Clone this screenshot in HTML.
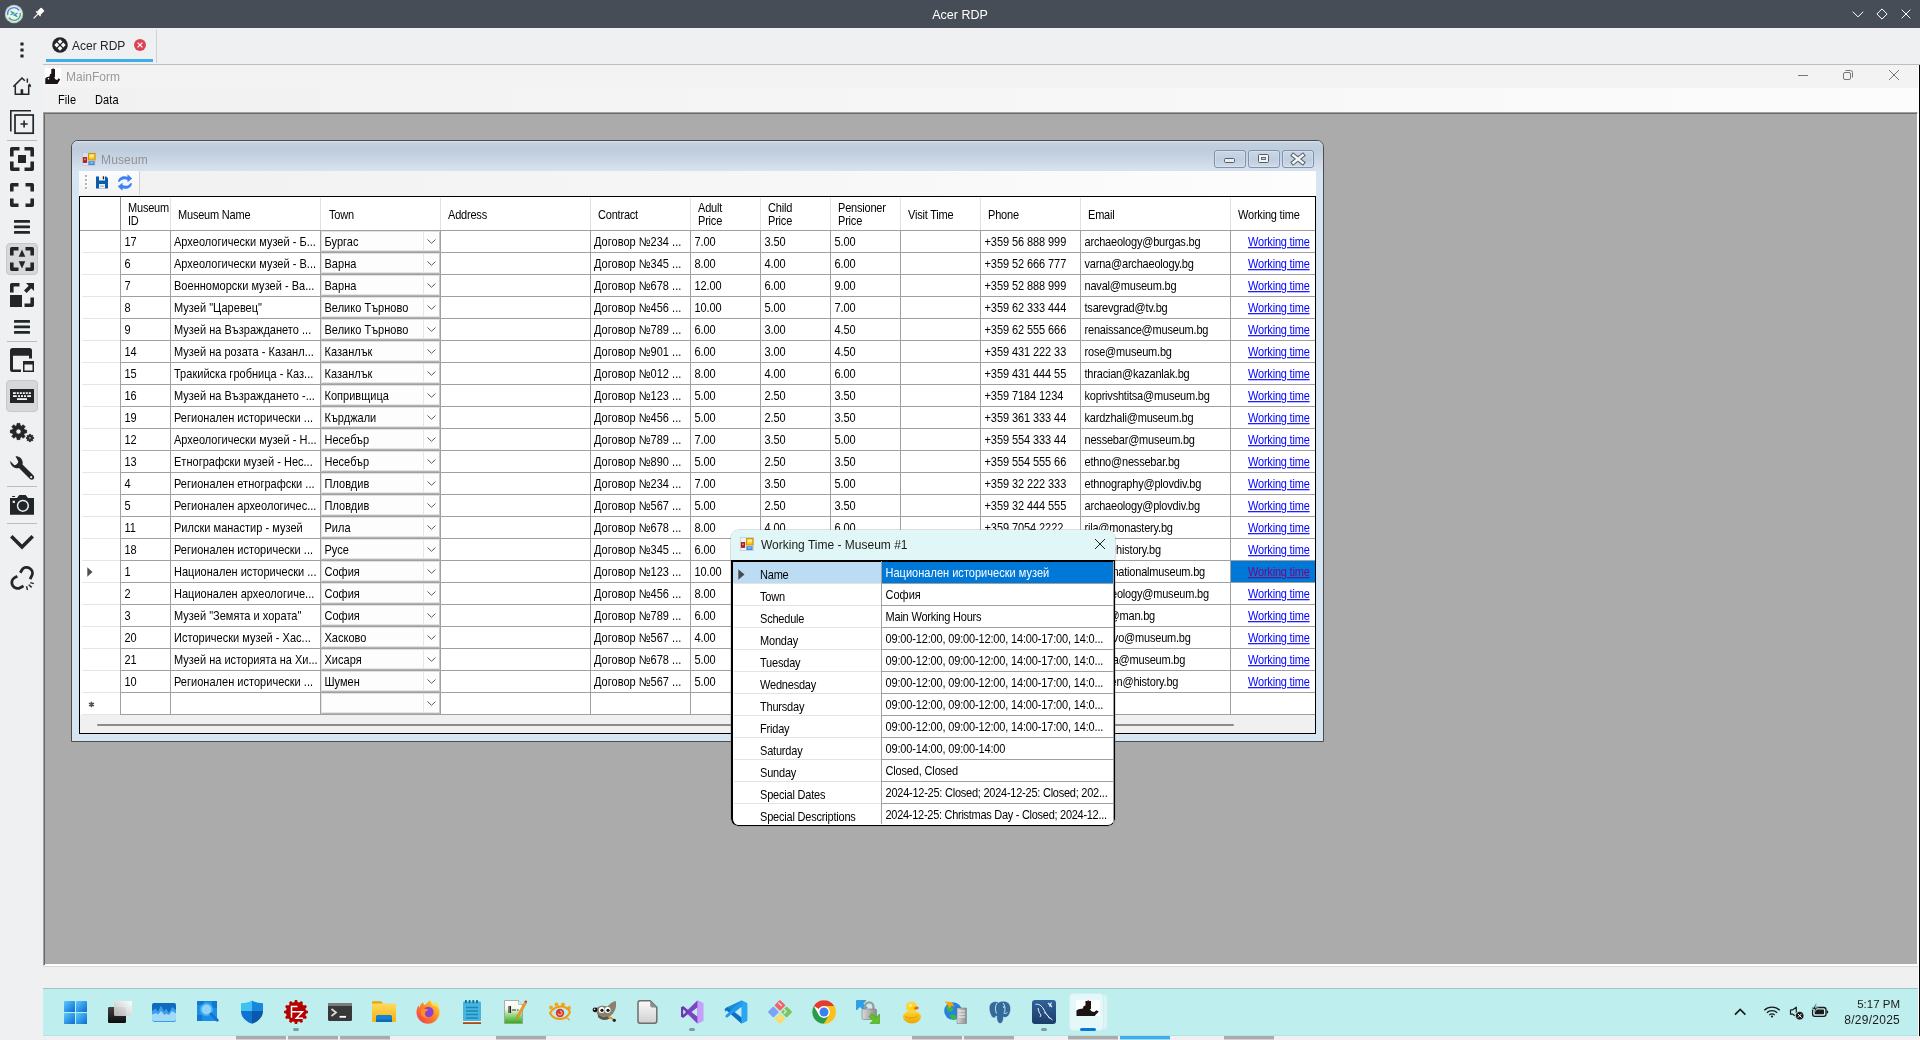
<!DOCTYPE html>
<html lang="en"><head><meta charset="utf-8"><title>Acer RDP</title>
<style>
*{box-sizing:border-box;margin:0;padding:0}
html,body{width:1920px;height:1040px;overflow:hidden}
body{position:relative;will-change:transform;background:#eff0f2;font-family:"Liberation Sans",sans-serif;font-size:11px;color:#000}
.a{position:absolute}
.a svg{display:block}
#top{left:0;top:0;width:1920px;height:28px;background:#474d57}
#top .t{left:0;width:1920px;top:1px;height:28px;line-height:28px;text-align:center;color:#fff;font-size:12.5px}
#side{left:0;top:28px;width:43px;height:1008px;background:#eff0f2}
.sep{left:7px;width:30px;height:1px;background:#bcbdbf}
.act{left:6px;width:32px;height:32px;border:1px solid #c6c7c9;border-radius:4px;background:#d7d8da}
#tabs{left:43px;top:28px;width:1877px;height:36px;background:#eff0f2}
#rdp{left:43px;top:64px;width:1877px;height:972px;background:#f0f0f0;overflow:hidden}
#mdi{left:0;top:48px;width:1875px;height:854px;background:#ababab;border:1px solid #fff;border-left-color:#a0a0a0;border-top-color:#a0a0a0;box-shadow:inset 1px 1px 0 #696969,inset 0 -1px 0 #fafafa}
.g{font-size:11px;letter-spacing:-.2px;white-space:nowrap;line-height:22px;height:22px;transform:scaleY(1.13);transform-origin:0 15px}
.h{font-size:11px;letter-spacing:-.2px;white-space:nowrap;line-height:11.5px;transform:scaleY(1.13);transform-origin:0 0}
.vl{top:0;width:1px;background:#a0a0a0}
.hl{left:0;height:1px;background:#a0a0a0}
.cb{height:21px;background:#fdfdfd;border:1px solid #e2e2e2;border-bottom:1px solid #b4b4b4;border-right-color:#c9c9c9;box-shadow:inset 0 -1px 0 #e4e4e4}
.cb i{position:absolute;right:15px;top:0;width:1px;height:19px;background:#e6e6e6}
.cb svg{position:absolute;right:3px;top:7px}
.lk{color:#0000ff;text-decoration:underline}
#tb{left:0;top:924px;width:1877px;height:48px;background:#bfeeee;border-top:1px solid #a9c8c9}
.c{letter-spacing:.02px}
.n{letter-spacing:-.08px}

</style></head>
<body>
<div id="top" class="a"><div class="a t">Acer RDP</div><svg class="a" style="left:4px;top:4px" width="20" height="20" viewBox="0 0 20 20"><circle cx="10" cy="10" r="9.200" fill="#c4c9ce"/><circle cx="10" cy="10" r="7.900" fill="#f3f1ec"/><path d="M3.800 11.200A6.300 6.300 0 0 1 15.200 6.500" fill="none" stroke="#3b8ee0" stroke-width="1.400"/><path d="M16.200 8.800A6.300 6.300 0 0 1 4.800 13.500" fill="none" stroke="#2fb871" stroke-width="1.400"/><path d="M6.600 7.300l3.200 1.800-3.200 1.800" fill="none" stroke="#2fb871" stroke-width="1.400"/><path d="M13.400 9.100l-3.200 1.800 3.200 1.800" fill="none" stroke="#3b8ee0" stroke-width="1.400"/></svg><svg class="a" style="left:32px;top:7px" width="13" height="13" viewBox="0 0 13 13"><g transform="rotate(45 7.500 5.500)" fill="#fff"><rect x="5.100" y="0.800" width="4.800" height="6" rx="0.900"/><rect x="4.300" y="6.500" width="6.400" height="1.300"/><rect x="6.900" y="7.500" width="1.200" height="6.300"/></g></svg><svg class="a" style="left:1848px;top:6px" width="68" height="16" viewBox="0 0 68 16"><g fill="none" stroke="#fff" stroke-width="1"><path d="M4.800 5.700L10 10.900 15.200 5.700"/><path d="M34 2.900L39.100 8 34 13.100 28.900 8z"/><path d="M53.700 3.700l8.600 8.600M62.300 3.700l-8.600 8.600"/></g></svg></div><div id="side" class="a"><div class="a sep" style="top:112px"></div><div class="a sep" style="top:313px"></div><div class="a sep" style="top:458px"></div><div class="a sep" style="top:495px"></div><div class="a act" style="top:215px"></div><div class="a act" style="top:352px"></div><svg class="a" style="left:0;top:0" width="43" height="580" viewBox="0 28 43 580"><g fill="#232629"><rect x="20.400" y="42.4" width="3.200" height="3.200" rx="0.500"/><rect x="20.400" y="48.4" width="3.200" height="3.200" rx="0.500"/><rect x="20.400" y="54.4" width="3.200" height="3.200" rx="0.500"/><path d="M13.4 86.6L22 78l2.800 2.800M28.800 84.800l1.800 1.800" fill="none" stroke="#232629" stroke-width="1.5"/><path d="M15.3 85.5v8.700h13.4v-8.700" fill="none" stroke="#232629" stroke-width="1.5"/><rect x="20.6" y="89.2" width="2.6" height="5"/><rect x="26.6" y="78.500" width="1.500" height="4.200"/><path d="M27.600 85.500l2.200-2.200 1.600 3.300z"/><path d="M10.800 131.500V110.800H31" fill="none" stroke="#232629" stroke-width="1.6"/><rect x="15" y="115" width="18.200" height="18.200" fill="none" stroke="#232629" stroke-width="1.700"/><path d="M20.500 124h7.200M24.100 120.400v7.200" fill="none" stroke="#232629" stroke-width="1.600"/><path d="M11.80 156.50V148.80H19.50M24.50 148.80H32.20V156.50M32.20 161.50V169.20H24.50M19.50 169.20H11.80V161.50" fill="none" stroke="#232629" stroke-width="3.6" stroke-linejoin="round"/><rect x="18" y="155" width="8" height="8"/><path d="M11.80 191.50V184.80H18.50M25.50 184.80H32.20V191.50M32.20 198.50V205.20H25.50M18.50 205.20H11.80V198.50" fill="none" stroke="#232629" stroke-width="3.6" stroke-linejoin="round"/><rect x="14" y="220.0" width="16" height="2.8" rx="0.4"/><rect x="14" y="225.5" width="16" height="2.8" rx="0.4"/><rect x="14" y="231.0" width="16" height="2.8" rx="0.4"/><rect x="14" y="320.0" width="16" height="2.8" rx="0.4"/><rect x="14" y="325.5" width="16" height="2.8" rx="0.4"/><rect x="14" y="331.0" width="16" height="2.8" rx="0.4"/><path d="M11.80 255.50V248.80H18.50M25.50 248.80H32.20V255.50M32.20 262.50V269.20H25.50M18.50 269.20H11.80V262.50" fill="none" stroke="#232629" stroke-width="3.6" stroke-linejoin="round"/><path d="M22 249.500l3.300 7.300h-6.600zM22 268.500l3.300-7.300h-6.600z"/><path d="M11.80 292.50V284.80H19.50M32.20 297.50V305.20H24.50" fill="none" stroke="#232629" stroke-width="3.6" stroke-linejoin="round"/><rect x="10" y="295" width="12" height="12"/><path d="M26 283h8v8l-2.700-2.700-4.700 4.700-2.600-2.600 4.700-4.700z"/><path d="M12.500 348h17q2.500 0 2.500 2.500v8h-3v-2.700h-16v13.700h8v2.500h-8.500q-2.500 0-2.500-2.500v-19q0-2.500 2.500-2.500z"/><path d="M23 361h11v11h-11zM24.500 364.500v6h8v-6z" fill-rule="evenodd"/><rect x="10" y="389" width="24" height="14"/><rect x="13.0" y="392.200" width="2.8" height="1.8" fill="#f4f4f5"/><rect x="16.8" y="392.200" width="2.0" height="1.8" fill="#f4f4f5"/><rect x="19.8" y="392.200" width="2.0" height="1.8" fill="#f4f4f5"/><rect x="22.8" y="392.200" width="2.0" height="1.8" fill="#f4f4f5"/><rect x="25.8" y="392.200" width="2.0" height="1.8" fill="#f4f4f5"/><rect x="28.8" y="392.200" width="2.0" height="1.8" fill="#f4f4f5"/><rect x="13.0" y="395.200" width="3.8" height="1.8" fill="#f4f4f5"/><rect x="18.0" y="395.200" width="2.0" height="1.8" fill="#f4f4f5"/><rect x="21.0" y="395.200" width="2.0" height="1.8" fill="#f4f4f5"/><rect x="24.0" y="395.200" width="2.0" height="1.8" fill="#f4f4f5"/><rect x="27.2" y="395.200" width="3.8" height="1.8" fill="#f4f4f5"/><rect x="17" y="398.200" width="10" height="1.8" fill="#f4f4f5"/><path d="M17.06 423.43L19.94 423.43L20.07 425.50L21.64 426.15L23.19 424.77L25.23 426.81L23.85 428.36L24.50 429.93L26.57 430.06L26.57 432.94L24.50 433.07L23.85 434.64L25.23 436.19L23.19 438.23L21.64 436.85L20.07 437.50L19.94 439.57L17.06 439.57L16.93 437.50L15.36 436.85L13.81 438.23L11.77 436.19L13.15 434.64L12.50 433.07L10.43 432.94L10.43 430.06L12.50 429.93L13.15 428.36L11.77 426.81L13.81 424.77L15.36 426.15L16.93 425.50zM15.90 431.50a2.60 2.60 0 1 0 5.20 0a2.60 2.60 0 1 0 -5.20 0z" fill-rule="evenodd" stroke="#232629" stroke-width="0.8" stroke-linejoin="round"/><path d="M29.35 434.36L30.65 434.36L30.71 435.29L31.42 435.58L32.12 434.96L33.04 435.88L32.42 436.58L32.71 437.29L33.64 437.35L33.64 438.65L32.71 438.71L32.42 439.42L33.04 440.12L32.12 441.04L31.42 440.42L30.71 440.71L30.65 441.64L29.35 441.64L29.29 440.71L28.58 440.42L27.88 441.04L26.96 440.12L27.58 439.42L27.29 438.71L26.36 438.65L26.36 437.35L27.29 437.29L27.58 436.58L26.96 435.88L27.88 434.96L28.58 435.58L29.29 435.29zM28.80 438.00a1.20 1.20 0 1 0 2.40 0a1.20 1.20 0 1 0 -2.40 0z" fill-rule="evenodd" stroke="#232629" stroke-width="0.8" stroke-linejoin="round"/><path d="M15.500 456.300c3.500-0.300 6.800 2 7.200 6 0.100 0.800 0 1.500-0.200 2.200l10.800 10.700c1.200 1.200 1.200 2.800 0.200 3.800s-2.700 0.900-3.800-0.200l-10.700-10.800c-0.700 0.200-1.500 0.300-2.300 0.200-3.800-0.400-6.500-3.500-6.500-7.200l4.200 4.200c1.500 0.300 3.600-1.300 3.900-3.600z"/><circle cx="31.200" cy="477.200" r="1.1" fill="#eff0f2"/><path d="M10 498h7l2.300-3h6.400l2.300 3h6v16.700h-24zM22.900 499.700a6.100 6.100 0 1 0 0.010 0zM22.900 501.200a4.600 4.600 0 1 1-0.010 0zM12.700 500.800v2.200h2.200v-2.200z" fill-rule="evenodd"/><circle cx="22.900" cy="505.800" r="3.600" fill="none" stroke="#232629" stroke-width="0.900"/><rect x="12" y="496" width="3.200" height="1" rx="0.500"/><path d="M11.300 536.300L22 547l10.700-10.700" fill="none" stroke="#232629" stroke-width="3.500"/><g fill="none" stroke="#232629" stroke-width="2.800"><path d="M20.300 572.800l1.700-3c1.700-2.700 5.200-3.200 7.800-1.500 2.500 1.700 3.400 4.800 2 7.400l-1.700 3.400"/><path d="M17.300 576.200l-3 1.700c-2.700 1.700-3.200 5.200-1.500 7.800 1.700 2.500 4.800 3.400 7.400 2l3.300-1.700"/></g><g fill="none" stroke="#232629" stroke-width="1.400"><path d="M30.300 582.600l3.500 1M28.700 584.800l3 2.600M26.500 586.300l1 3.700"/></g></g></svg></div><div id="tabs" class="a"><svg class="a" style="left:9px;top:9px" width="16" height="16" viewBox="0 0 16 16"><circle cx="8" cy="8" r="7.800" fill="#232629"/><path d="M8 2.300L10.400 4.700 8 7.100 5.600 4.700zM8 8.900L10.400 11.300 8 13.700 5.600 11.300zM4.700 5.600L7.100 8 4.700 10.400 2.300 8zM11.300 5.600L13.700 8 11.300 10.400 8.900 8z" fill="#fcfcfc"/></svg><div class="a" style="left:29px;top:9px;font-size:12px;line-height:18px;color:#232629;white-space:nowrap">Acer RDP</div><svg class="a" style="left:91px;top:11px" width="12" height="12" viewBox="0 0 12 12"><circle cx="6" cy="6" r="6" fill="#da4453"/><path d="M3.600 3.600l4.800 4.800M8.400 3.600l-4.800 4.800" stroke="#fff" stroke-width="1.200" fill="none"/></svg><div class="a" style="left:3px;top:31px;width:107px;height:3px;background:#3daee9"></div><div class="a" style="left:113px;top:2px;width:1px;height:33px;background:#d0d1d3"></div></div><div id="rdp" class="a"><div class="a" style="left:0;top:0;width:1877px;height:1px;background:#bdbebf"></div><div class="a" style="left:0;top:1px;width:1875px;height:23px;background:#f3f3f3"></div><div class="a" style="left:0;top:24px;width:1875px;height:24px;background:linear-gradient(90deg,#f1f1f1,#f4f4f4 30%,#fcfcfc)"></div><div class="a" style="left:1875px;top:1px;width:1px;height:971px;background:#fff"></div><div class="a" style="left:1876px;top:1px;width:1px;height:971px;background:#000"></div><svg class="a" style="left:2px;top:4px" width="16" height="16" viewBox="0 0 16 16"><rect width="16" height="16" fill="#fff"/><path d="M6.300 1H10V8.800L9.200 9.600 10.600 11.600 12.200 12 13.600 10.200 15.200 11.600 12.400 15.900H0.300V10.400L1.600 9.300 4.600 8.600 5 6.200 6.300 5.600z" fill="#1a1414"/><rect x="2.800" y="10" width="1.400" height="1.400" fill="#fff"/><rect x="7.600" y="0.200" width="1.200" height="1.200" fill="#e01010"/></svg><div class="a" style="left:23px;top:4px;font-size:12px;line-height:18px;color:#999;white-space:nowrap;letter-spacing:0">MainForm</div><div class="a" style="left:15px;top:27px;font-size:11px;line-height:18px;white-space:nowrap;letter-spacing:.1px;transform:scaleY(1.13);transform-origin:0 13px">File</div><div class="a" style="left:52px;top:27px;font-size:11px;line-height:18px;white-space:nowrap;letter-spacing:.1px;transform:scaleY(1.13);transform-origin:0 13px">Data</div><svg class="a" style="left:1750px;top:4px" width="112" height="16" viewBox="0 0 112 16"><g fill="none" stroke="#777" stroke-width="1"><path d="M5 7.500h10"/><rect x="50.500" y="4.500" width="7" height="7" rx="1.500"/><path d="M52.500 2.500h5q2 0 2 2v5"/><path d="M96 2l10 10M106 2l-10 10"/></g></svg><div id="mdi" class="a"></div><div class="a" style="left:0;top:902px;width:1875px;height:22px;background:#f0f0f0;border-top:1px solid #d9d9d9"></div></div><div class="a" style="left:0;top:1036px;width:1920px;height:4px;background:#eff0f1"></div><div class="a" style="left:236px;top:1036px;width:50px;height:4px;background:#ababab;border-bottom:1px solid #d0d0d0"></div><div class="a" style="left:288px;top:1036px;width:50px;height:4px;background:#ababab;border-bottom:1px solid #d0d0d0"></div><div class="a" style="left:340px;top:1036px;width:50px;height:4px;background:#ababab;border-bottom:1px solid #d0d0d0"></div><div class="a" style="left:496px;top:1036px;width:50px;height:4px;background:#ababab;border-bottom:1px solid #d0d0d0"></div><div class="a" style="left:912px;top:1036px;width:50px;height:4px;background:#ababab;border-bottom:1px solid #d0d0d0"></div><div class="a" style="left:964px;top:1036px;width:50px;height:4px;background:#ababab;border-bottom:1px solid #d0d0d0"></div><div class="a" style="left:1068px;top:1036px;width:50px;height:4px;background:#ababab;border-bottom:1px solid #d0d0d0"></div><div class="a" style="left:1120px;top:1036px;width:50px;height:4px;background:#3daee9;border-bottom:1px solid #a5d8f3"></div><div class="a" style="left:1224px;top:1036px;width:50px;height:4px;background:#ababab;border-bottom:1px solid #d0d0d0"></div><div class="a" style="left:71px;top:140px;width:1253px;height:602px;border:1px solid #4d4d4d;border-radius:7px 7px 0 0;background:#d7e4f2;overflow:hidden"><div class="a" style="left:0;top:0;width:1251px;height:30px;background:linear-gradient(#dbe4ee 0,#c3d0df 2px,#bdccdc 8px,#c6d3e2 16px,#d7e2ef 29px)"></div><svg class="a" style="left:10px;top:11px" width="14" height="14" viewBox="0 0 14 14"><rect x="0.500" y="0.500" width="13" height="13" fill="#d9e6f5" stroke="#c9b8b0" stroke-width="0.600" opacity="0.700"/><rect x="6.500" y="1.500" width="6.500" height="6.500" fill="#f7c51c" stroke="#c98f06" stroke-width="0.900"/><rect x="7.600" y="2.400" width="4.300" height="3" fill="#ffe680"/><rect x="1.200" y="5.500" width="3.600" height="5" fill="#c0110b" stroke="#8e0c08" stroke-width="0.600"/><rect x="2.300" y="6.500" width="1.300" height="1.800" fill="#ffb0a0"/><rect x="6.800" y="9.600" width="5.400" height="3.200" fill="#3f8df0" stroke="#2a6fd0" stroke-width="0.500"/><rect x="7.800" y="10.300" width="3.400" height="1.200" fill="#9cc6ff"/></svg><div class="a" style="left:29px;top:10px;font-size:12px;line-height:18px;color:#939393;white-space:nowrap;letter-spacing:.15px">Museum</div><div class="a" style="left:1142px;top:9px;width:32px;height:18px;border:1px solid #8292ae;border-radius:3px;background:linear-gradient(#c9d6e5,#bfcedf 55%,#cedae8);box-shadow:inset 0 0 0 1px rgba(255,255,255,.25)"></div><div class="a" style="left:1176px;top:9px;width:32px;height:18px;border:1px solid #8292ae;border-radius:3px;background:linear-gradient(#c9d6e5,#bfcedf 55%,#cedae8);box-shadow:inset 0 0 0 1px rgba(255,255,255,.25)"></div><div class="a" style="left:1210px;top:9px;width:32px;height:18px;border:1px solid #8292ae;border-radius:3px;background:linear-gradient(#c9d6e5,#bfcedf 55%,#cedae8);box-shadow:inset 0 0 0 1px rgba(255,255,255,.25)"></div><svg class="a" style="left:1142px;top:9px" width="100" height="18" viewBox="0 0 100 18"><rect x="10.500" y="8.500" width="10" height="4" rx="1" fill="#ececec" stroke="#535c6b"/><rect x="44.500" y="4.500" width="10" height="8" rx="1" fill="#f4f4f4" stroke="#535c6b"/><rect x="47.500" y="7.500" width="4" height="2" fill="#c4d2e2" stroke="#535c6b" stroke-width="0.900"/><path d="M79.300 5.300l9.400 7.400M88.700 5.300l-9.400 7.400" stroke="#535c6b" stroke-width="4.400" fill="none" stroke-linecap="square"/><path d="M79.300 5.300l9.400 7.400M88.700 5.300l-9.400 7.400" stroke="#f4f4f4" stroke-width="2.400" fill="none" stroke-linecap="square"/></svg><div class="a" style="left:7px;top:30px;width:1237px;height:563px;background:#f0f0f0"></div><div class="a" style="left:7px;top:30px;width:1237px;height:25px;background:linear-gradient(90deg,#f1f1f1,#f5f5f5 45%,#fdfdfd)"></div><div class="a" style="left:7px;top:30px;width:61px;height:24px;background:linear-gradient(#fcfcfc,#f3f3f3);border-right:1px solid #cfcfcf;border-radius:0 2px 2px 0"></div><svg class="a" style="left:13px;top:34px" width="3" height="16" viewBox="0 0 3 16"><rect x="1" y="1" width="2" height="2" fill="#fff"/><rect x="0" y="0" width="2" height="2" fill="#b4b4b4"/><rect x="1" y="5" width="2" height="2" fill="#fff"/><rect x="0" y="4" width="2" height="2" fill="#b4b4b4"/><rect x="1" y="9" width="2" height="2" fill="#fff"/><rect x="0" y="8" width="2" height="2" fill="#b4b4b4"/><rect x="1" y="13" width="2" height="2" fill="#fff"/><rect x="0" y="12" width="2" height="2" fill="#b4b4b4"/></svg><svg class="a" style="left:24px;top:35px" width="12" height="13" viewBox="0 0 12 13"><path d="M0 0.500h10.300L12 2.200V12.500H0z" fill="#0b5cab"/><rect x="3" y="0" width="6" height="4.500" fill="#f2f4f6"/><rect x="6.800" y="0.300" width="1.300" height="3" fill="#222"/><rect x="3" y="8" width="6" height="4.500" fill="#eceff2"/><rect x="4" y="9.500" width="4" height="1.500" fill="#b9bec4"/></svg><svg class="a" style="left:45px;top:33px" width="16" height="17" viewBox="0 0 16 17"><g fill="#3b82f6"><path d="M1 7.800C1.300 4.200 4.300 2.200 7.600 2.200c1 0 2 0.200 2.900 0.600V0.200l4.700 4.400-4.700 3.700V5.900c-0.900-0.500-1.900-0.700-2.900-0.700-2.300 0-4.200 1-4.800 2.600z"/><path d="M15 9.200c-0.300 3.600-3.300 5.600-6.600 5.600-1 0-2-0.200-2.900-0.600v2.600L0.800 12.400l4.700-3.700v2.400c0.900 0.500 1.900 0.700 2.900 0.700 2.300 0 4.200-1 4.800-2.600z"/></g></svg><div class="a" style="left:7px;top:55px;width:1237px;height:538px;border:1px solid #000;background:#fff;overflow:hidden"><div class="a vl" style="left:40px;height:33px;background:#8d8d8d"></div><div class="a vl" style="left:90px;top:1px;height:32px;background:#e1e1e1"></div><div class="a vl" style="left:240px;top:1px;height:32px;background:#e1e1e1"></div><div class="a vl" style="left:360px;top:1px;height:32px;background:#e1e1e1"></div><div class="a vl" style="left:510px;top:1px;height:32px;background:#e1e1e1"></div><div class="a vl" style="left:610px;top:1px;height:32px;background:#e1e1e1"></div><div class="a vl" style="left:680px;top:1px;height:32px;background:#e1e1e1"></div><div class="a vl" style="left:750px;top:1px;height:32px;background:#e1e1e1"></div><div class="a vl" style="left:820px;top:1px;height:32px;background:#e1e1e1"></div><div class="a vl" style="left:900px;top:1px;height:32px;background:#e1e1e1"></div><div class="a vl" style="left:1000px;top:1px;height:32px;background:#e1e1e1"></div><div class="a vl" style="left:1150px;top:1px;height:32px;background:#e1e1e1"></div><div class="a vl" style="left:40px;top:33px;height:485px"></div><div class="a vl" style="left:90px;top:33px;height:485px"></div><div class="a vl" style="left:240px;top:33px;height:485px"></div><div class="a vl" style="left:360px;top:33px;height:485px"></div><div class="a vl" style="left:510px;top:33px;height:485px"></div><div class="a vl" style="left:610px;top:33px;height:485px"></div><div class="a vl" style="left:680px;top:33px;height:485px"></div><div class="a vl" style="left:750px;top:33px;height:485px"></div><div class="a vl" style="left:820px;top:33px;height:485px"></div><div class="a vl" style="left:900px;top:33px;height:485px"></div><div class="a vl" style="left:1000px;top:33px;height:485px"></div><div class="a vl" style="left:1150px;top:33px;height:485px"></div><div class="a hl" style="top:33px;width:1235px"></div><div class="a hl" style="top:55px;width:40px;left:2px;background:#e6e6e6"></div><div class="a hl" style="top:55px;left:40px;width:1195px"></div><div class="a hl" style="top:77px;width:40px;left:2px;background:#e6e6e6"></div><div class="a hl" style="top:77px;left:40px;width:1195px"></div><div class="a hl" style="top:99px;width:40px;left:2px;background:#e6e6e6"></div><div class="a hl" style="top:99px;left:40px;width:1195px"></div><div class="a hl" style="top:121px;width:40px;left:2px;background:#e6e6e6"></div><div class="a hl" style="top:121px;left:40px;width:1195px"></div><div class="a hl" style="top:143px;width:40px;left:2px;background:#e6e6e6"></div><div class="a hl" style="top:143px;left:40px;width:1195px"></div><div class="a hl" style="top:165px;width:40px;left:2px;background:#e6e6e6"></div><div class="a hl" style="top:165px;left:40px;width:1195px"></div><div class="a hl" style="top:187px;width:40px;left:2px;background:#e6e6e6"></div><div class="a hl" style="top:187px;left:40px;width:1195px"></div><div class="a hl" style="top:209px;width:40px;left:2px;background:#e6e6e6"></div><div class="a hl" style="top:209px;left:40px;width:1195px"></div><div class="a hl" style="top:231px;width:40px;left:2px;background:#e6e6e6"></div><div class="a hl" style="top:231px;left:40px;width:1195px"></div><div class="a hl" style="top:253px;width:40px;left:2px;background:#e6e6e6"></div><div class="a hl" style="top:253px;left:40px;width:1195px"></div><div class="a hl" style="top:275px;width:40px;left:2px;background:#e6e6e6"></div><div class="a hl" style="top:275px;left:40px;width:1195px"></div><div class="a hl" style="top:297px;width:40px;left:2px;background:#e6e6e6"></div><div class="a hl" style="top:297px;left:40px;width:1195px"></div><div class="a hl" style="top:319px;width:40px;left:2px;background:#e6e6e6"></div><div class="a hl" style="top:319px;left:40px;width:1195px"></div><div class="a hl" style="top:341px;width:40px;left:2px;background:#e6e6e6"></div><div class="a hl" style="top:341px;left:40px;width:1195px"></div><div class="a hl" style="top:363px;width:40px;left:2px;background:#e6e6e6"></div><div class="a hl" style="top:363px;left:40px;width:1195px"></div><div class="a hl" style="top:385px;width:40px;left:2px;background:#e6e6e6"></div><div class="a hl" style="top:385px;left:40px;width:1195px"></div><div class="a hl" style="top:407px;width:40px;left:2px;background:#e6e6e6"></div><div class="a hl" style="top:407px;left:40px;width:1195px"></div><div class="a hl" style="top:429px;width:40px;left:2px;background:#e6e6e6"></div><div class="a hl" style="top:429px;left:40px;width:1195px"></div><div class="a hl" style="top:451px;width:40px;left:2px;background:#e6e6e6"></div><div class="a hl" style="top:451px;left:40px;width:1195px"></div><div class="a hl" style="top:473px;width:40px;left:2px;background:#e6e6e6"></div><div class="a hl" style="top:473px;left:40px;width:1195px"></div><div class="a hl" style="top:495px;width:40px;left:2px;background:#e6e6e6"></div><div class="a hl" style="top:495px;left:40px;width:1195px"></div><div class="a hl" style="top:517px;width:40px;left:2px;background:#e6e6e6"></div><div class="a hl" style="top:517px;left:40px;width:1195px"></div><div class="a" style="left:0;top:518px;width:1235px;height:18px;background:#f0f0f0"></div><div class="a" style="left:17px;top:527px;width:1137px;height:2px;background:#8b8b8b;border-radius:1px"></div><div class="a h" style="left:48px;top:5px">Museum</div><div class="a h" style="left:48px;top:18px">ID</div><div class="a h" style="left:98px;top:12px">Museum Name</div><div class="a h" style="left:249px;top:12px">Town</div><div class="a h" style="left:368px;top:12px">Address</div><div class="a h" style="left:518px;top:12px">Contract</div><div class="a h" style="left:618px;top:5px">Adult</div><div class="a h" style="left:618px;top:18px">Price</div><div class="a h" style="left:688px;top:5px">Child</div><div class="a h" style="left:688px;top:18px">Price</div><div class="a h" style="left:758px;top:5px">Pensioner</div><div class="a h" style="left:758px;top:18px">Price</div><div class="a h" style="left:828px;top:12px">Visit Time</div><div class="a h" style="left:908px;top:12px">Phone</div><div class="a h" style="left:1008px;top:12px">Email</div><div class="a h" style="left:1158px;top:12px">Working time</div><div class="a cb" style="left:241px;top:34px;width:119px"><i></i><svg width="9" height="5" viewBox="0 0 9 5"><path d="M0.500 0.500L4.500 4.300 8.500 0.500" fill="none" stroke="#5e5e5e" stroke-width="1"/></svg></div><div class="a g n" style="left:44.5px;top:34px">17</div><div class="a g c" style="left:94px;top:34px">Археологически музей - Б...</div><div class="a g c" style="left:244.5px;top:34px">Бургас</div><div class="a g c" style="left:514px;top:34px">Договор №234 ...</div><div class="a g n" style="left:614.5px;top:34px">7.00</div><div class="a g n" style="left:684.5px;top:34px">3.50</div><div class="a g n" style="left:754.5px;top:34px">5.00</div><div class="a g n" style="left:904.5px;top:34px">+359 56 888 999</div><div class="a g" style="left:1004.5px;top:34px">archaeology@burgas.bg</div><div class="a g lk" style="left:1168px;top:34px">Working time</div><div class="a cb" style="left:241px;top:56px;width:119px"><i></i><svg width="9" height="5" viewBox="0 0 9 5"><path d="M0.500 0.500L4.500 4.300 8.500 0.500" fill="none" stroke="#5e5e5e" stroke-width="1"/></svg></div><div class="a g n" style="left:44.5px;top:56px">6</div><div class="a g c" style="left:94px;top:56px">Археологически музей - В...</div><div class="a g c" style="left:244.5px;top:56px">Варна</div><div class="a g c" style="left:514px;top:56px">Договор №345 ...</div><div class="a g n" style="left:614.5px;top:56px">8.00</div><div class="a g n" style="left:684.5px;top:56px">4.00</div><div class="a g n" style="left:754.5px;top:56px">6.00</div><div class="a g n" style="left:904.5px;top:56px">+359 52 666 777</div><div class="a g" style="left:1004.5px;top:56px">varna@archaeology.bg</div><div class="a g lk" style="left:1168px;top:56px">Working time</div><div class="a cb" style="left:241px;top:78px;width:119px"><i></i><svg width="9" height="5" viewBox="0 0 9 5"><path d="M0.500 0.500L4.500 4.300 8.500 0.500" fill="none" stroke="#5e5e5e" stroke-width="1"/></svg></div><div class="a g n" style="left:44.5px;top:78px">7</div><div class="a g c" style="left:94px;top:78px">Военноморски музей - Ва...</div><div class="a g c" style="left:244.5px;top:78px">Варна</div><div class="a g c" style="left:514px;top:78px">Договор №678 ...</div><div class="a g n" style="left:614.5px;top:78px">12.00</div><div class="a g n" style="left:684.5px;top:78px">6.00</div><div class="a g n" style="left:754.5px;top:78px">9.00</div><div class="a g n" style="left:904.5px;top:78px">+359 52 888 999</div><div class="a g" style="left:1004.5px;top:78px">naval@museum.bg</div><div class="a g lk" style="left:1168px;top:78px">Working time</div><div class="a cb" style="left:241px;top:100px;width:119px"><i></i><svg width="9" height="5" viewBox="0 0 9 5"><path d="M0.500 0.500L4.500 4.300 8.500 0.500" fill="none" stroke="#5e5e5e" stroke-width="1"/></svg></div><div class="a g n" style="left:44.5px;top:100px">8</div><div class="a g c" style="left:94px;top:100px">Музей &quot;Царевец&quot;</div><div class="a g c" style="left:244.5px;top:100px">Велико Търново</div><div class="a g c" style="left:514px;top:100px">Договор №456 ...</div><div class="a g n" style="left:614.5px;top:100px">10.00</div><div class="a g n" style="left:684.5px;top:100px">5.00</div><div class="a g n" style="left:754.5px;top:100px">7.00</div><div class="a g n" style="left:904.5px;top:100px">+359 62 333 444</div><div class="a g" style="left:1004.5px;top:100px">tsarevgrad@tv.bg</div><div class="a g lk" style="left:1168px;top:100px">Working time</div><div class="a cb" style="left:241px;top:122px;width:119px"><i></i><svg width="9" height="5" viewBox="0 0 9 5"><path d="M0.500 0.500L4.500 4.300 8.500 0.500" fill="none" stroke="#5e5e5e" stroke-width="1"/></svg></div><div class="a g n" style="left:44.5px;top:122px">9</div><div class="a g c" style="left:94px;top:122px">Музей на Възраждането ...</div><div class="a g c" style="left:244.5px;top:122px">Велико Търново</div><div class="a g c" style="left:514px;top:122px">Договор №789 ...</div><div class="a g n" style="left:614.5px;top:122px">6.00</div><div class="a g n" style="left:684.5px;top:122px">3.00</div><div class="a g n" style="left:754.5px;top:122px">4.50</div><div class="a g n" style="left:904.5px;top:122px">+359 62 555 666</div><div class="a g" style="left:1004.5px;top:122px">renaissance@museum.bg</div><div class="a g lk" style="left:1168px;top:122px">Working time</div><div class="a cb" style="left:241px;top:144px;width:119px"><i></i><svg width="9" height="5" viewBox="0 0 9 5"><path d="M0.500 0.500L4.500 4.300 8.500 0.500" fill="none" stroke="#5e5e5e" stroke-width="1"/></svg></div><div class="a g n" style="left:44.5px;top:144px">14</div><div class="a g c" style="left:94px;top:144px">Музей на розата - Казанл...</div><div class="a g c" style="left:244.5px;top:144px">Казанлък</div><div class="a g c" style="left:514px;top:144px">Договор №901 ...</div><div class="a g n" style="left:614.5px;top:144px">6.00</div><div class="a g n" style="left:684.5px;top:144px">3.00</div><div class="a g n" style="left:754.5px;top:144px">4.50</div><div class="a g n" style="left:904.5px;top:144px">+359 431 222 33</div><div class="a g" style="left:1004.5px;top:144px">rose@museum.bg</div><div class="a g lk" style="left:1168px;top:144px">Working time</div><div class="a cb" style="left:241px;top:166px;width:119px"><i></i><svg width="9" height="5" viewBox="0 0 9 5"><path d="M0.500 0.500L4.500 4.300 8.500 0.500" fill="none" stroke="#5e5e5e" stroke-width="1"/></svg></div><div class="a g n" style="left:44.5px;top:166px">15</div><div class="a g c" style="left:94px;top:166px">Тракийска гробница - Каз...</div><div class="a g c" style="left:244.5px;top:166px">Казанлък</div><div class="a g c" style="left:514px;top:166px">Договор №012 ...</div><div class="a g n" style="left:614.5px;top:166px">8.00</div><div class="a g n" style="left:684.5px;top:166px">4.00</div><div class="a g n" style="left:754.5px;top:166px">6.00</div><div class="a g n" style="left:904.5px;top:166px">+359 431 444 55</div><div class="a g" style="left:1004.5px;top:166px">thracian@kazanlak.bg</div><div class="a g lk" style="left:1168px;top:166px">Working time</div><div class="a cb" style="left:241px;top:188px;width:119px"><i></i><svg width="9" height="5" viewBox="0 0 9 5"><path d="M0.500 0.500L4.500 4.300 8.500 0.500" fill="none" stroke="#5e5e5e" stroke-width="1"/></svg></div><div class="a g n" style="left:44.5px;top:188px">16</div><div class="a g c" style="left:94px;top:188px">Музей на Възраждането -...</div><div class="a g c" style="left:244.5px;top:188px">Копривщица</div><div class="a g c" style="left:514px;top:188px">Договор №123 ...</div><div class="a g n" style="left:614.5px;top:188px">5.00</div><div class="a g n" style="left:684.5px;top:188px">2.50</div><div class="a g n" style="left:754.5px;top:188px">3.50</div><div class="a g n" style="left:904.5px;top:188px">+359 7184 1234</div><div class="a g" style="left:1004.5px;top:188px">koprivshtitsa@museum.bg</div><div class="a g lk" style="left:1168px;top:188px">Working time</div><div class="a cb" style="left:241px;top:210px;width:119px"><i></i><svg width="9" height="5" viewBox="0 0 9 5"><path d="M0.500 0.500L4.500 4.300 8.500 0.500" fill="none" stroke="#5e5e5e" stroke-width="1"/></svg></div><div class="a g n" style="left:44.5px;top:210px">19</div><div class="a g c" style="left:94px;top:210px">Регионален исторически ...</div><div class="a g c" style="left:244.5px;top:210px">Кърджали</div><div class="a g c" style="left:514px;top:210px">Договор №456 ...</div><div class="a g n" style="left:614.5px;top:210px">5.00</div><div class="a g n" style="left:684.5px;top:210px">2.50</div><div class="a g n" style="left:754.5px;top:210px">3.50</div><div class="a g n" style="left:904.5px;top:210px">+359 361 333 44</div><div class="a g" style="left:1004.5px;top:210px">kardzhali@museum.bg</div><div class="a g lk" style="left:1168px;top:210px">Working time</div><div class="a cb" style="left:241px;top:232px;width:119px"><i></i><svg width="9" height="5" viewBox="0 0 9 5"><path d="M0.500 0.500L4.500 4.300 8.500 0.500" fill="none" stroke="#5e5e5e" stroke-width="1"/></svg></div><div class="a g n" style="left:44.5px;top:232px">12</div><div class="a g c" style="left:94px;top:232px">Археологически музей - Н...</div><div class="a g c" style="left:244.5px;top:232px">Несебър</div><div class="a g c" style="left:514px;top:232px">Договор №789 ...</div><div class="a g n" style="left:614.5px;top:232px">7.00</div><div class="a g n" style="left:684.5px;top:232px">3.50</div><div class="a g n" style="left:754.5px;top:232px">5.00</div><div class="a g n" style="left:904.5px;top:232px">+359 554 333 44</div><div class="a g" style="left:1004.5px;top:232px">nessebar@museum.bg</div><div class="a g lk" style="left:1168px;top:232px">Working time</div><div class="a cb" style="left:241px;top:254px;width:119px"><i></i><svg width="9" height="5" viewBox="0 0 9 5"><path d="M0.500 0.500L4.500 4.300 8.500 0.500" fill="none" stroke="#5e5e5e" stroke-width="1"/></svg></div><div class="a g n" style="left:44.5px;top:254px">13</div><div class="a g c" style="left:94px;top:254px">Етнографски музей - Нес...</div><div class="a g c" style="left:244.5px;top:254px">Несебър</div><div class="a g c" style="left:514px;top:254px">Договор №890 ...</div><div class="a g n" style="left:614.5px;top:254px">5.00</div><div class="a g n" style="left:684.5px;top:254px">2.50</div><div class="a g n" style="left:754.5px;top:254px">3.50</div><div class="a g n" style="left:904.5px;top:254px">+359 554 555 66</div><div class="a g" style="left:1004.5px;top:254px">ethno@nessebar.bg</div><div class="a g lk" style="left:1168px;top:254px">Working time</div><div class="a cb" style="left:241px;top:276px;width:119px"><i></i><svg width="9" height="5" viewBox="0 0 9 5"><path d="M0.500 0.500L4.500 4.300 8.500 0.500" fill="none" stroke="#5e5e5e" stroke-width="1"/></svg></div><div class="a g n" style="left:44.5px;top:276px">4</div><div class="a g c" style="left:94px;top:276px">Регионален етнографски ...</div><div class="a g c" style="left:244.5px;top:276px">Пловдив</div><div class="a g c" style="left:514px;top:276px">Договор №234 ...</div><div class="a g n" style="left:614.5px;top:276px">7.00</div><div class="a g n" style="left:684.5px;top:276px">3.50</div><div class="a g n" style="left:754.5px;top:276px">5.00</div><div class="a g n" style="left:904.5px;top:276px">+359 32 222 333</div><div class="a g" style="left:1004.5px;top:276px">ethnography@plovdiv.bg</div><div class="a g lk" style="left:1168px;top:276px">Working time</div><div class="a cb" style="left:241px;top:298px;width:119px"><i></i><svg width="9" height="5" viewBox="0 0 9 5"><path d="M0.500 0.500L4.500 4.300 8.500 0.500" fill="none" stroke="#5e5e5e" stroke-width="1"/></svg></div><div class="a g n" style="left:44.5px;top:298px">5</div><div class="a g c" style="left:94px;top:298px">Регионален археологичес...</div><div class="a g c" style="left:244.5px;top:298px">Пловдив</div><div class="a g c" style="left:514px;top:298px">Договор №567 ...</div><div class="a g n" style="left:614.5px;top:298px">5.00</div><div class="a g n" style="left:684.5px;top:298px">2.50</div><div class="a g n" style="left:754.5px;top:298px">3.50</div><div class="a g n" style="left:904.5px;top:298px">+359 32 444 555</div><div class="a g" style="left:1004.5px;top:298px">archaeology@plovdiv.bg</div><div class="a g lk" style="left:1168px;top:298px">Working time</div><div class="a cb" style="left:241px;top:320px;width:119px"><i></i><svg width="9" height="5" viewBox="0 0 9 5"><path d="M0.500 0.500L4.500 4.300 8.500 0.500" fill="none" stroke="#5e5e5e" stroke-width="1"/></svg></div><div class="a g n" style="left:44.5px;top:320px">11</div><div class="a g c" style="left:94px;top:320px">Рилски манастир - музей</div><div class="a g c" style="left:244.5px;top:320px">Рила</div><div class="a g c" style="left:514px;top:320px">Договор №678 ...</div><div class="a g n" style="left:614.5px;top:320px">8.00</div><div class="a g n" style="left:684.5px;top:320px">4.00</div><div class="a g n" style="left:754.5px;top:320px">6.00</div><div class="a g n" style="left:904.5px;top:320px">+359 7054 2222</div><div class="a g" style="left:1004.5px;top:320px">rila@monastery.bg</div><div class="a g lk" style="left:1168px;top:320px">Working time</div><div class="a cb" style="left:241px;top:342px;width:119px"><i></i><svg width="9" height="5" viewBox="0 0 9 5"><path d="M0.500 0.500L4.500 4.300 8.500 0.500" fill="none" stroke="#5e5e5e" stroke-width="1"/></svg></div><div class="a g n" style="left:44.5px;top:342px">18</div><div class="a g c" style="left:94px;top:342px">Регионален исторически ...</div><div class="a g c" style="left:244.5px;top:342px">Русе</div><div class="a g c" style="left:514px;top:342px">Договор №345 ...</div><div class="a g n" style="left:614.5px;top:342px">6.00</div><div class="a g n" style="left:684.5px;top:342px">3.00</div><div class="a g n" style="left:754.5px;top:342px">4.50</div><div class="a g n" style="left:904.5px;top:342px">+359 82 111 222</div><div class="a g" style="left:1004.5px;top:342px">ruse@history.bg</div><div class="a g lk" style="left:1168px;top:342px">Working time</div><div class="a cb" style="left:241px;top:364px;width:119px"><i></i><svg width="9" height="5" viewBox="0 0 9 5"><path d="M0.500 0.500L4.500 4.300 8.500 0.500" fill="none" stroke="#5e5e5e" stroke-width="1"/></svg></div><div class="a" style="left:1151px;top:364px;width:84px;height:21px;background:#0078d7"></div><div class="a g n" style="left:44.5px;top:364px">1</div><div class="a g c" style="left:94px;top:364px">Национален исторически ...</div><div class="a g c" style="left:244.5px;top:364px">София</div><div class="a g c" style="left:514px;top:364px">Договор №123 ...</div><div class="a g n" style="left:614.5px;top:364px">10.00</div><div class="a g n" style="left:684.5px;top:364px">5.00</div><div class="a g n" style="left:754.5px;top:364px">7.00</div><div class="a g n" style="left:904.5px;top:364px">+359 2 955 4280</div><div class="a g" style="left:1004.5px;top:364px">info@nationalmuseum.bg</div><div class="a g lk" style="left:1168px;top:364px;color:#800080">Working time</div><div class="a cb" style="left:241px;top:386px;width:119px"><i></i><svg width="9" height="5" viewBox="0 0 9 5"><path d="M0.500 0.500L4.500 4.300 8.500 0.500" fill="none" stroke="#5e5e5e" stroke-width="1"/></svg></div><div class="a g n" style="left:44.5px;top:386px">2</div><div class="a g c" style="left:94px;top:386px">Национален археологиче...</div><div class="a g c" style="left:244.5px;top:386px">София</div><div class="a g c" style="left:514px;top:386px">Договор №456 ...</div><div class="a g n" style="left:614.5px;top:386px">8.00</div><div class="a g n" style="left:684.5px;top:386px">4.00</div><div class="a g n" style="left:754.5px;top:386px">6.00</div><div class="a g n" style="left:904.5px;top:386px">+359 2 988 2406</div><div class="a g" style="left:1004.5px;top:386px">archaeology@museum.bg</div><div class="a g lk" style="left:1168px;top:386px">Working time</div><div class="a cb" style="left:241px;top:408px;width:119px"><i></i><svg width="9" height="5" viewBox="0 0 9 5"><path d="M0.500 0.500L4.500 4.300 8.500 0.500" fill="none" stroke="#5e5e5e" stroke-width="1"/></svg></div><div class="a g n" style="left:44.5px;top:408px">3</div><div class="a g c" style="left:94px;top:408px">Музей &quot;Земята и хората&quot;</div><div class="a g c" style="left:244.5px;top:408px">София</div><div class="a g c" style="left:514px;top:408px">Договор №789 ...</div><div class="a g n" style="left:614.5px;top:408px">6.00</div><div class="a g n" style="left:684.5px;top:408px">3.00</div><div class="a g n" style="left:754.5px;top:408px">4.50</div><div class="a g n" style="left:904.5px;top:408px">+359 2 865 6639</div><div class="a g" style="left:1004.5px;top:408px">earth@man.bg</div><div class="a g lk" style="left:1168px;top:408px">Working time</div><div class="a cb" style="left:241px;top:430px;width:119px"><i></i><svg width="9" height="5" viewBox="0 0 9 5"><path d="M0.500 0.500L4.500 4.300 8.500 0.500" fill="none" stroke="#5e5e5e" stroke-width="1"/></svg></div><div class="a g n" style="left:44.5px;top:430px">20</div><div class="a g c" style="left:94px;top:430px">Исторически музей - Хас...</div><div class="a g c" style="left:244.5px;top:430px">Хасково</div><div class="a g c" style="left:514px;top:430px">Договор №567 ...</div><div class="a g n" style="left:614.5px;top:430px">4.00</div><div class="a g n" style="left:684.5px;top:430px">2.00</div><div class="a g n" style="left:754.5px;top:430px">3.00</div><div class="a g n" style="left:904.5px;top:430px">+359 38 111 222</div><div class="a g" style="left:1004.5px;top:430px">haskovo@museum.bg</div><div class="a g lk" style="left:1168px;top:430px">Working time</div><div class="a cb" style="left:241px;top:452px;width:119px"><i></i><svg width="9" height="5" viewBox="0 0 9 5"><path d="M0.500 0.500L4.500 4.300 8.500 0.500" fill="none" stroke="#5e5e5e" stroke-width="1"/></svg></div><div class="a g n" style="left:44.5px;top:452px">21</div><div class="a g c" style="left:94px;top:452px">Музей на историята на Хи...</div><div class="a g c" style="left:244.5px;top:452px">Хисаря</div><div class="a g c" style="left:514px;top:452px">Договор №678 ...</div><div class="a g n" style="left:614.5px;top:452px">5.00</div><div class="a g n" style="left:684.5px;top:452px">2.50</div><div class="a g n" style="left:754.5px;top:452px">3.50</div><div class="a g n" style="left:904.5px;top:452px">+359 337 111 22</div><div class="a g" style="left:1004.5px;top:452px">hisarya@museum.bg</div><div class="a g lk" style="left:1168px;top:452px">Working time</div><div class="a cb" style="left:241px;top:474px;width:119px"><i></i><svg width="9" height="5" viewBox="0 0 9 5"><path d="M0.500 0.500L4.500 4.300 8.500 0.500" fill="none" stroke="#5e5e5e" stroke-width="1"/></svg></div><div class="a g n" style="left:44.5px;top:474px">10</div><div class="a g c" style="left:94px;top:474px">Регионален исторически ...</div><div class="a g c" style="left:244.5px;top:474px">Шумен</div><div class="a g c" style="left:514px;top:474px">Договор №567 ...</div><div class="a g n" style="left:614.5px;top:474px">5.00</div><div class="a g n" style="left:684.5px;top:474px">2.50</div><div class="a g n" style="left:754.5px;top:474px">3.50</div><div class="a g n" style="left:904.5px;top:474px">+359 54 111 222</div><div class="a g" style="left:1004.5px;top:474px">shumen@history.bg</div><div class="a g lk" style="left:1168px;top:474px">Working time</div><div class="a cb" style="left:241px;top:496px;width:119px"><i></i><svg width="9" height="5" viewBox="0 0 9 5"><path d="M0.500 0.500L4.500 4.300 8.500 0.500" fill="none" stroke="#5e5e5e" stroke-width="1"/></svg></div><svg class="a" style="left:7px;top:370px" width="6" height="10" viewBox="0 0 6 10"><path d="M0.300 0.300L5.500 5 0.300 9.700z" fill="#4f4f4f"/></svg><svg class="a" style="left:8px;top:504px" width="7" height="7" viewBox="0 0 7 7"><path d="M3.500 0.800v5.400M1 2.100l5 2.800M6 2.100l-5 2.800" stroke="#4f4f4f" stroke-width="1.600" fill="none"/></svg></div></div><div class="a" style="left:731px;top:530px;width:384px;height:296px;border-radius:8px 8px 7px 7px;overflow:hidden;background:#fff;box-shadow:0 0 0 .5px rgba(120,120,120,.5)"><div class="a" style="left:0;top:0;width:384px;height:30px;background:#e1f6f6"></div><svg class="a" style="left:9px;top:7px" width="14" height="14" viewBox="0 0 14 14"><rect x="0.500" y="0.500" width="13" height="13" fill="#eef3f6" stroke="#c6c6c6" stroke-width="0.700"/><rect x="6.500" y="1.500" width="6.500" height="6.500" fill="#f7c51c" stroke="#c98f06" stroke-width="0.900"/><rect x="7.600" y="2.400" width="4.300" height="3" fill="#ffe680"/><rect x="1.200" y="5.500" width="3.600" height="5" fill="#c0110b" stroke="#8e0c08" stroke-width="0.600"/><rect x="2.300" y="6.500" width="1.300" height="1.800" fill="#ffb0a0"/><rect x="6.800" y="9.600" width="5.400" height="3.200" fill="#3f8df0" stroke="#2a6fd0" stroke-width="0.500"/><rect x="7.800" y="10.300" width="3.400" height="1.200" fill="#9cc6ff"/></svg><div class="a" style="left:30px;top:6px;font-size:12px;line-height:18px;color:#1b1b1b;white-space:nowrap">Working Time - Museum #1</div><svg class="a" style="left:363px;top:8px" width="12" height="12" viewBox="0 0 12 12"><path d="M1 1l10 10M11 1L1 11" stroke="#1f1f1f" stroke-width="1" fill="none"/></svg><div class="a" style="left:0;top:30px;width:384px;height:266px;background:#fff;border:1px solid #000;border-left-width:2px;border-top-width:2px;border-radius:0 0 7px 7px"></div><div class="a" style="left:2px;top:32px;width:148px;height:21px;background:#bcdcf4"></div><div class="a" style="left:151px;top:32px;width:231px;height:21px;background:#0078d7"></div><div class="a" style="left:150px;top:31px;width:1px;height:263px;background:#a0a0a0"></div><div class="a" style="left:382px;top:31px;width:1px;height:263px;background:#a0a0a0"></div><div class="a" style="left:3px;top:53px;width:147px;height:1px;background:#e3e3e3"></div><div class="a" style="left:151px;top:53px;width:232px;height:1px;background:#a0a0a0"></div><div class="a" style="left:3px;top:75px;width:147px;height:1px;background:#e3e3e3"></div><div class="a" style="left:151px;top:75px;width:232px;height:1px;background:#a0a0a0"></div><div class="a" style="left:3px;top:97px;width:147px;height:1px;background:#e3e3e3"></div><div class="a" style="left:151px;top:97px;width:232px;height:1px;background:#a0a0a0"></div><div class="a" style="left:3px;top:119px;width:147px;height:1px;background:#e3e3e3"></div><div class="a" style="left:151px;top:119px;width:232px;height:1px;background:#a0a0a0"></div><div class="a" style="left:3px;top:141px;width:147px;height:1px;background:#e3e3e3"></div><div class="a" style="left:151px;top:141px;width:232px;height:1px;background:#a0a0a0"></div><div class="a" style="left:3px;top:163px;width:147px;height:1px;background:#e3e3e3"></div><div class="a" style="left:151px;top:163px;width:232px;height:1px;background:#a0a0a0"></div><div class="a" style="left:3px;top:185px;width:147px;height:1px;background:#e3e3e3"></div><div class="a" style="left:151px;top:185px;width:232px;height:1px;background:#a0a0a0"></div><div class="a" style="left:3px;top:207px;width:147px;height:1px;background:#e3e3e3"></div><div class="a" style="left:151px;top:207px;width:232px;height:1px;background:#a0a0a0"></div><div class="a" style="left:3px;top:229px;width:147px;height:1px;background:#e3e3e3"></div><div class="a" style="left:151px;top:229px;width:232px;height:1px;background:#a0a0a0"></div><div class="a" style="left:3px;top:251px;width:147px;height:1px;background:#e3e3e3"></div><div class="a" style="left:151px;top:251px;width:232px;height:1px;background:#a0a0a0"></div><div class="a" style="left:3px;top:273px;width:147px;height:1px;background:#e3e3e3"></div><div class="a" style="left:151px;top:273px;width:232px;height:1px;background:#a0a0a0"></div><div class="a g" style="left:29px;top:34px">Name</div><div class="a g c" style="left:154.5px;top:32px;color:#fff">Национален исторически музей</div><div class="a g" style="left:29px;top:56px">Town</div><div class="a g c" style="left:154.5px;top:54px">София</div><div class="a g" style="left:29px;top:78px">Schedule</div><div class="a g" style="left:154.5px;top:76px">Main Working Hours</div><div class="a g" style="left:29px;top:100px">Monday</div><div class="a g" style="left:154.5px;top:98px;letter-spacing:-.16px">09:00-12:00, 09:00-12:00, 14:00-17:00, 14:0...</div><div class="a g" style="left:29px;top:122px">Tuesday</div><div class="a g" style="left:154.5px;top:120px;letter-spacing:-.16px">09:00-12:00, 09:00-12:00, 14:00-17:00, 14:0...</div><div class="a g" style="left:29px;top:144px">Wednesday</div><div class="a g" style="left:154.5px;top:142px;letter-spacing:-.16px">09:00-12:00, 09:00-12:00, 14:00-17:00, 14:0...</div><div class="a g" style="left:29px;top:166px">Thursday</div><div class="a g" style="left:154.5px;top:164px;letter-spacing:-.16px">09:00-12:00, 09:00-12:00, 14:00-17:00, 14:0...</div><div class="a g" style="left:29px;top:188px">Friday</div><div class="a g" style="left:154.5px;top:186px;letter-spacing:-.16px">09:00-12:00, 09:00-12:00, 14:00-17:00, 14:0...</div><div class="a g" style="left:29px;top:210px">Saturday</div><div class="a g" style="left:154.5px;top:208px;letter-spacing:-.16px">09:00-14:00, 09:00-14:00</div><div class="a g" style="left:29px;top:232px">Sunday</div><div class="a g" style="left:154.5px;top:230px;letter-spacing:-.16px">Closed, Closed</div><div class="a g" style="left:29px;top:254px">Special Dates</div><div class="a g" style="left:154.5px;top:252px;letter-spacing:-.24px">2024-12-25: Closed; 2024-12-25: Closed; 202...</div><div class="a g" style="left:29px;top:276px">Special Descriptions</div><div class="a g" style="left:154.5px;top:274px;letter-spacing:-.28px">2024-12-25: Christmas Day - Closed; 2024-12...</div><svg class="a" style="left:7px;top:39px" width="7" height="11" viewBox="0 0 7 11"><path d="M0.300 0.300L6.500 5.500 0.300 10.700z" fill="#4a4a4a"/></svg></div><div class="a" style="left:43px;top:988px;width:1875px;height:48px;background:#bfeeee;border-top:1px solid #a3c2c3;border-bottom:1px solid #b4e2e2"></div><svg class="a" style="left:0;top:0;width:0;height:0" width="0" height="0"><defs><linearGradient id="gw" x1="0" y1="0" x2="1" y2="1"><stop offset="0" stop-color="#5bcbfd"/><stop offset="1" stop-color="#0b6ad3"/></linearGradient><linearGradient id="gk" x1="0" y1="0" x2="0" y2="1"><stop offset="0" stop-color="#444"/><stop offset="1" stop-color="#0c0c0c"/></linearGradient><linearGradient id="gl" x1="1" y1="0" x2="0" y2="1"><stop offset="0" stop-color="#fff"/><stop offset="1" stop-color="#bdbdbd"/></linearGradient><linearGradient id="gf" x1="0" y1="0" x2="0" y2="1"><stop offset="0" stop-color="#ffd964"/><stop offset="1" stop-color="#f5b400"/></linearGradient><linearGradient id="gx" x1="1" y1="0" x2="0" y2="1"><stop offset="0" stop-color="#ffe14d"/><stop offset=".45" stop-color="#ff8a1e"/><stop offset="1" stop-color="#f0305c"/></linearGradient><linearGradient id="gn" x1="0" y1="0" x2="0" y2="1"><stop offset="0" stop-color="#fff"/><stop offset=".35" stop-color="#f2f8e8"/><stop offset="1" stop-color="#2faa12"/></linearGradient><linearGradient id="gm" x1="0" y1="0" x2="0" y2="1"><stop offset="0" stop-color="#2f639b"/><stop offset="1" stop-color="#1b3c69"/></linearGradient><linearGradient id="gd" x1="0" y1="0" x2="0" y2="1"><stop offset="0" stop-color="#fbfbfb"/><stop offset="1" stop-color="#cfcfcf"/></linearGradient><linearGradient id="gy" x1="0" y1="0" x2="0" y2="1"><stop offset="0" stop-color="#ffd83a"/><stop offset="1" stop-color="#eda400"/></linearGradient><linearGradient id="gs" x1="0" y1="0" x2="1" y2="0"><stop offset="0" stop-color="#d9d9d9"/><stop offset="1" stop-color="#8c8c8c"/></linearGradient></defs></svg><div class="a" style="left:1103px;top:994px;width:5px;height:36px;border-radius:0 4px 4px 0;background:#d8f4f5;border:1px solid #cdeaec;border-left:0"></div><div class="a" style="left:1069px;top:993px;width:35px;height:38px;border-radius:4px;background:#e4f7f9;border:1px solid #d3eef0"></div><svg class="a" style="left:64px;top:1000px" width="24" height="24" viewBox="0 0 24 24"><g fill="url(#gw)"><rect x="0" y="1" width="11" height="11" rx="0.600"/><rect x="12" y="1" width="11" height="11" rx="0.600"/><rect x="0" y="13" width="11" height="11" rx="0.600"/><rect x="12" y="13" width="11" height="11" rx="0.600"/></g></svg><svg class="a" style="left:108px;top:1000px" width="24" height="24" viewBox="0 0 24 24"><rect x="0" y="7" width="18" height="16" rx="1.200" fill="url(#gk)"/><rect x="6" y="1" width="18" height="15" rx="1.200" fill="url(#gl)" opacity="0.930"/></svg><svg class="a" style="left:152px;top:1000px" width="24" height="24" viewBox="0 0 24 24"><rect x="0" y="3" width="24" height="18" rx="1.800" fill="#0f6ac0"/><path d="M0 11l3.500-2.500 2.500 3 3-6 3 6 2-3 3 4.500 3-6 4 3v10.200q0 1.800-1.800 1.800H1.800Q0 21 0 19.200z" fill="#3a9ee8"/><path d="M0 14.500l4-1.500 2 1.500 3-3.500 3.500 4 2-1.500 2.500 1.500 3-4 4 2.500v5.700q0 1.800-1.800 1.800H1.800Q0 21 0 19.200z" fill="#a2daf9"/></svg><svg class="a" style="left:196px;top:1000px" width="24" height="24" viewBox="0 0 24 24"><rect x="1" y="1" width="20" height="20" fill="#1c8fe4"/><path d="M1 1h7v4h-7zM16 1h5v7h-5zM1 15h5v6h-5z" fill="#1277d3"/><circle cx="10.500" cy="9.500" r="5.800" fill="#8fd3f8" stroke="#3eaaf0" stroke-width="1.800"/><path d="M15 14l6.300 6.300" stroke="#1670d4" stroke-width="2.800" stroke-linecap="round"/></svg><svg class="a" style="left:240px;top:1000px" width="24" height="24" viewBox="0 0 24 24"><path d="M12 0.500C9 2.500 5 3.200 1 3.200V11h11z" fill="#3fc1f1"/><path d="M12 0.500c3 2 7 2.700 11 2.700V11H12z" fill="#1787de"/><path d="M1 11c0 6 4.500 10.500 11 12.800V11z" fill="#1173d1"/><path d="M23 11c0 6-4.500 10.500-11 12.800V11z" fill="#0c58a8"/></svg><svg class="a" style="left:284px;top:1000px" width="24" height="24" viewBox="0 0 24 24"><path d="M10.92 0.05L13.08 0.05L13.71 2.15L15.45 2.61L17.04 1.11L18.91 2.19L18.41 4.32L19.68 5.59L21.81 5.09L22.89 6.96L21.39 8.55L21.85 10.29L23.95 10.92L23.95 13.08L21.85 13.71L21.39 15.45L22.89 17.04L21.81 18.91L19.68 18.41L18.41 19.68L18.91 21.81L17.04 22.89L15.45 21.39L13.71 21.85L13.08 23.95L10.92 23.95L10.29 21.85L8.55 21.39L6.96 22.89L5.09 21.81L5.59 19.68L4.32 18.41L2.19 18.91L1.11 17.04L2.61 15.45L2.15 13.71L0.05 13.08L0.05 10.92L2.15 10.29L2.61 8.55L1.11 6.96L2.19 5.09L4.32 5.59L5.59 4.32L5.09 2.19L6.96 1.11L8.55 2.61L10.29 2.15z" fill="#b60000"/><path d="M13.500 6.500H7.500V17.800M7.500 11.800h4.800M12.500 11.800h6l-6.300 6.500h6.800" fill="none" stroke="#fff" stroke-width="1.500"/></svg><svg class="a" style="left:328px;top:1000px" width="24" height="24" viewBox="0 0 24 24"><rect x="0" y="3" width="24" height="18" rx="1.500" fill="#383838"/><path d="M1.500 3h21q1.500 0 1.500 1.500V6H0V4.500Q0 3 1.500 3z" fill="#7a7a7a"/><path d="M3.500 9l4.500 3.500L3.500 16" fill="none" stroke="#d8d8d8" stroke-width="1.800"/><path d="M11.500 16.800h6.500" stroke="#fff" stroke-width="1.800"/></svg><svg class="a" style="left:372px;top:1000px" width="24" height="24" viewBox="0 0 24 24"><path d="M0 2.500Q0 1.200 1.300 1.200h7.200q1 0 1.500 1l0.900 1.800H0z" fill="#e5a50a"/><rect x="0" y="3.500" width="24" height="18.500" rx="1.300" fill="url(#gf)"/><path d="M4 22v-5.500q0-1.500 1.500-1.500h13q1.500 0 1.500 1.500V22z" fill="#1581d6"/><path d="M4 19.500h16V22H4z" fill="#0f69bd"/></svg><svg class="a" style="left:416px;top:1000px" width="24" height="24" viewBox="0 0 24 24"><path d="M13.500 0.300c2.500 1.200 3.500 3 3.800 4.600 1-0.700 1.600-1.800 1.700-3 3 2.500 4.500 6 4.500 10 0 6.500-5 11.800-11.500 11.800S0.500 18.500 0.500 12c0-2.500 0.800-5 2.200-6.800 0.100 1 0.400 1.800 0.900 2.500C4 5.500 5.200 3.500 7 2.300c0.200 1.200 0.800 2.200 1.800 2.900 1.200-1.300 3.200-3 4.700-4.900z" fill="url(#gx)"/><path d="M13.500 0.300c2.500 1.200 3.500 3 3.800 4.600 1-0.700 1.600-1.800 1.700-3 2.300 2 3.700 4.500 4.200 7.300-1.500-2.500-4-3.700-6.700-3.500-1.200-2-2-3.500-3-5.400z" fill="#ffde45"/><circle cx="12.300" cy="12" r="5.300" fill="#8a3fd8"/><path d="M5.500 9.500c2.500-1.200 5.500-0.800 7.200 0.800-2.300 0.200-3.700 1.600-3.700 3.500 0 2 1.500 3.500 3.800 3.600-3 1.500-7-0.200-7.800-3.600-0.300-1.500-0.100-3 0.500-4.300z" fill="#ff8f22"/></svg><svg class="a" style="left:460px;top:1000px" width="24" height="24" viewBox="0 0 24 24"><rect x="3" y="1.500" width="18" height="19.500" rx="1" fill="#45b6e0"/><path d="M3 21h18v1.200H3z" fill="#f4f4f4"/><path d="M3 22.200h18v1.800H3z" fill="#ad4a0e"/><g fill="#1c6b9e"><rect x="5" y="0" width="1.800" height="3.200"/><rect x="8.700" y="0" width="1.800" height="3.200"/><rect x="12.400" y="0" width="1.800" height="3.200"/><rect x="16.100" y="0" width="1.800" height="3.200"/></g><path d="M6 7.500h12M6 11h12M6 14.500h12M6 18h12" stroke="#1d86b8" stroke-width="1.600"/></svg><svg class="a" style="left:504px;top:1000px" width="24" height="24" viewBox="0 0 24 24"><path d="M0.500 0.500h14l4 4V23.500H0.500z" fill="url(#gn)" stroke="#9a9a9a" stroke-width="0.800"/><path d="M14.500 0.500v4h4" fill="#e8e8e8" stroke="#9a9a9a" stroke-width="0.600"/><path d="M5 6v7M6.500 6v7" stroke="#222" stroke-width="1.100"/><path d="M8 10h4M13 10h1.500" stroke="#333" stroke-width="1"/><path d="M21 1.500l1.800 1.200L14.500 17l-2.200 1.800 0.400-2.800z" fill="#f0a020" stroke="#c77a10" stroke-width="0.500"/><circle cx="21.800" cy="1.600" r="1.200" fill="#c0392b"/></svg><svg class="a" style="left:548px;top:1000px" width="24" height="24" viewBox="0 0 24 24"><g fill="#f5a614"><circle cx="3" cy="7.500" r="1.900"/><circle cx="8.500" cy="4.500" r="2"/><circle cx="15" cy="4.500" r="2"/><circle cx="21" cy="8" r="1.900"/></g><path d="M2 13c3-5 8-6.500 11-6.500s7 2 9 5.500c-2 4.500-6 7-10 7s-8-2-10-6z" fill="none" stroke="#ef9a10" stroke-width="1.900"/><circle cx="12" cy="13" r="4.200" fill="#d63a2a"/><path d="M12 11a2 2 0 1 1-2 2.300" fill="none" stroke="#ffd9c9" stroke-width="0.900"/><path d="M18 18c2 0 3 1 3.500 2.500" fill="none" stroke="#ef9a10" stroke-width="1.200"/></svg><svg class="a" style="left:592px;top:1000px" width="24" height="24" viewBox="0 0 24 24"><path d="M23.500 1c-3 0.500-6 3-8 5.500-3-1-7-1-9.500 0.500-1.500 1-3 1.500-4 1-0.500 1.500 0.500 3 2.500 3.800 0.500 3.500 3 6.200 7.500 6.200 5.500 0 10-4 11.500-9.500C24.500 5 24.500 2.500 23.500 1z" fill="#8a8173"/><path d="M6 14c2 3 6 4 9 2.500l3 1.500c-3 3-9 2.500-12-1z" fill="#5b5347"/><circle cx="3" cy="9.800" r="2.400" fill="#111"/><circle cx="2.500" cy="9.200" r="0.800" fill="#fff"/><circle cx="9.700" cy="10" r="2.900" fill="#fff"/><circle cx="10" cy="10.300" r="1.600" fill="#111"/><circle cx="15.700" cy="10" r="2.900" fill="#fff"/><circle cx="16" cy="10.300" r="1.600" fill="#111"/><path d="M16.500 16.500l5 3" stroke="#e08a1e" stroke-width="1.600"/><circle cx="22.300" cy="20.300" r="1.600" fill="#222"/></svg><svg class="a" style="left:636px;top:1000px" width="24" height="24" viewBox="0 0 24 24"><path d="M4.200 0.800h10l6.600 6.600V21q0 2.200-2.200 2.200H4.200Q2 23.200 2 21V3Q2 0.800 4.200 0.800z" fill="url(#gd)" stroke="#6e6e6e" stroke-width="1.500"/><path d="M14.200 0.800v4.600q0 2 2 2h4.600z" fill="#8d8d8d"/></svg><svg class="a" style="left:680px;top:1000px" width="24" height="24" viewBox="0 0 24 24"><path d="M17.500 0.500l5.700 2.700v17.600l-5.700 2.700-9.800-9-4.300 3.300L1 16.700V7.300l2.400-1.100 4.300 3.300z" fill="#a36be0"/><path d="M17.500 0.500v23L6.500 12z" fill="#7a45c0"/><path d="M17.500 7.200v9.600L11.500 12z" fill="#bfeeee"/><path d="M3.400 6.200L9.500 12l-6.100 5.800L1 16.700V7.300z" fill="#6a3bb0"/><path d="M3.200 9.300v5.400L6 12z" fill="#bfeeee"/><path d="M17.500 0.500l5.700 2.700v17.600l-5.700 2.700z" fill="#c99cff"/></svg><svg class="a" style="left:724px;top:1000px" width="24" height="24" viewBox="0 0 24 24"><path d="M17.500 0.500l5.700 2.700v17.600l-5.700 2.700L3 10.500l-1.800 1.300L0.500 9.200 3 7.200z" fill="#1a8ad8" transform="translate(0 0)"/><path d="M17.500 23.500L1 9l2-1.800L17.500 18z" fill="#0f6fc2"/><path d="M17.500 0.500L2.800 14.200 1 16.200l2 1.600L17.500 6z" fill="#1f9cf0"/><path d="M17.500 0.500l5.700 2.700v17.600l-5.700 2.700z" fill="#2aa6f5"/><path d="M17.500 6.800v10.400L10.800 12z" fill="#bfeeee"/></svg><svg class="a" style="left:768px;top:1000px" width="24" height="24" viewBox="0 0 24 24"><g transform="rotate(45 12 12)"><rect x="3.300" y="3.300" width="8" height="8" rx="1" fill="#f4606c"/><rect x="12.700" y="3.300" width="8" height="8" rx="1" fill="#7dc55a"/><rect x="12.700" y="12.700" width="8" height="8" rx="1" fill="#f7dc6a"/><rect x="3.300" y="12.700" width="8" height="8" rx="1" fill="#7aa5f5"/></g><path d="M10.500 2.800l3.200 3.200M15.800 9.300l2.200 2.200-2.200 2.200M12.200 17.200l-1.500 1.500" stroke="#bfeeee" stroke-width="1.300" fill="none"/></svg><svg class="a" style="left:812px;top:1000px" width="24" height="24" viewBox="0 0 24 24"><circle cx="12" cy="12" r="11.800" fill="#fff"/><path d="M12 0.200A11.800 11.800 0 0 1 22.200 6.100H12a5.900 5.900 0 0 0-5.100 3L1.800 6.100A11.800 11.800 0 0 1 12 0.200z" fill="#e33b2e"/><path d="M22.200 6.100A11.800 11.800 0 0 1 12 23.800l5.100-8.850a5.900 5.900 0 0 0 0-5.900z" fill="#fbc116" transform="translate(0 0)"/><path d="M22.200 6.100H12a5.900 5.900 0 0 1 5.100 8.850L12 23.800A11.800 11.800 0 0 0 22.200 6.100z" fill="#fbc116"/><path d="M1.800 6.100l5.100 8.850a5.900 5.900 0 0 0 10.200 0L12 23.800A11.800 11.800 0 0 1 1.800 6.100z" fill="#2a9d4a"/><circle cx="12" cy="12" r="5.600" fill="#fff"/><circle cx="12" cy="12" r="4.500" fill="#3b82f0"/></svg><svg class="a" style="left:856px;top:1000px" width="24" height="24" viewBox="0 0 24 24"><path d="M0.500 0.500h9.500L7 3.500l4 4-3 3-4-4L0.500 10z" fill="#2aa0e8" stroke="#1b7fc4" stroke-width="0.600"/><path d="M9 9V6.500a4.200 4.200 0 0 1 8.400 0V9" fill="none" stroke="#9a9a9a" stroke-width="2.300"/><rect x="6" y="9" width="14.500" height="10.500" rx="1.300" fill="url(#gs)" stroke="#7d7d7d" stroke-width="0.600"/><path d="M23.500 23.500H14l3-3-4-4 3-3 4 4 3.500-3.500z" fill="#63c02a" stroke="#3f9a14" stroke-width="0.600"/></svg><svg class="a" style="left:900px;top:1000px" width="24" height="24" viewBox="0 0 24 24"><ellipse cx="12" cy="17" rx="9" ry="6.500" fill="url(#gy)"/><circle cx="11.500" cy="7" r="5.600" fill="#ffd531"/><path d="M14 7.500c2-1.500 4.500-1 5 0.500-1 1.800-3.500 2.200-5 1z" fill="#f06a1e"/><circle cx="10.500" cy="5.500" r="1.300" fill="#fff3b0"/><path d="M5 16c2 2.500 9 3 13-0.500" fill="none" stroke="#e09a00" stroke-width="1"/></svg><svg class="a" style="left:944px;top:1000px" width="24" height="24" viewBox="0 0 24 24"><circle cx="9" cy="11" r="8.800" fill="#2b7fe0"/><path d="M3 6c2-1 5 0 6 2s-1 4-3 4-4-2-3-6zM6 15c3-1 6 0 7 2l-2 3c-3 0-5-2-5-5z" fill="#35b84a"/><path d="M13 8h9.500v15.500H13z" fill="url(#gs)" stroke="#777" stroke-width="0.500"/><path d="M14.500 11h6.500M14.500 14h6.500M14.500 17h6.500" stroke="#f2f2f2" stroke-width="1.100"/><path d="M0.500 1.500l7.500 0.500 2.500 5-3-1.500-2 3-1.500-3.500z" fill="#f5a51a"/></svg><svg class="a" style="left:988px;top:1000px" width="24" height="24" viewBox="0 0 24 24"><path d="M4 2.500c-3 1.500-3.500 6-2 10.500 1 3 2.500 5 4 5 1 0 1.500-1 2-2l0.800 0.300c-0.300 3 0.700 7 3.200 7.200 2.500 0 3.500-3 3.500-6.500 2 1 4.500 0 6-3 1.800-4 1.500-9-1.500-11.500-3-2-7.500-1.500-9.500 0C8.500 1 6 1.500 4 2.500z" fill="#336a9c" stroke="#d9eef4" stroke-width="0.500"/><path d="M15 3c2 2 2.500 6 1.500 9.500M9 3C7 6 7 10 8.500 13.500M15.500 13c1.500 0.800 3 0.500 4-0.500" fill="none" stroke="#d9eef4" stroke-width="0.900"/><circle cx="15.800" cy="7" r="0.700" fill="#fff"/></svg><svg class="a" style="left:1032px;top:1000px" width="24" height="24" viewBox="0 0 24 24"><rect x="0" y="0" width="24" height="24" rx="3" fill="url(#gm)"/><path d="M3.500 4.500c3-1 6 1 8 4.500 1.500 2.700 3 6.500 6 8.500l3 2.500M6 8c0.500 3 1.500 5.500 3 7l-1 2M12 12.500c2 0.500 4 3 5.500 6" fill="none" stroke="#e8f0f8" stroke-width="1"/><path d="M16 3l4 4M19.500 2.500l-2 4" stroke="#e8f0f8" stroke-width="1.200" fill="none"/></svg><svg class="a" style="left:1076px;top:1000px" width="24" height="24" viewBox="0 0 24 24"><rect x="0" y="0" width="24" height="16" fill="#fff"/><path transform="scale(1.5 1)" d="M6.300 1H10V8.800L9.200 9.600 10.600 11.600 12.200 12 13.600 10.200 15.200 11.600 12.400 15.900H0.300V10.400L1.600 9.300 4.600 8.600 5 6.200 6.300 5.600z" fill="#1a1414"/><rect x="11.500" y="0.200" width="1.600" height="1.200" fill="#e01010"/></svg><div class="a" style="left:293px;top:1028px;width:6px;height:3px;border-radius:1.500px;background:#7f9b9d"></div><div class="a" style="left:689px;top:1028px;width:6px;height:3px;border-radius:1.500px;background:#7f9b9d"></div><div class="a" style="left:1041px;top:1028px;width:6px;height:3px;border-radius:1.500px;background:#7f9b9d"></div><div class="a" style="left:1080px;top:1028px;width:16px;height:3px;border-radius:1.500px;background:#0a78d4"></div><svg class="a" style="left:1730px;top:1000px" width="104" height="24" viewBox="1730 1000 104 24"><g fill="none" stroke="#1a1a1a"><path d="M1735 1014.700l5.200-5.200 5.200 5.200" stroke-width="1.700"/><path d="M1764.300 1010.200a11 11 0 0 1 15.400 0" stroke-width="1.200"/><path d="M1766.800 1012.700a7.400 7.400 0 0 1 10.400 0" stroke-width="1.200"/><path d="M1769.300 1015.100a3.800 3.800 0 0 1 5.400 0" stroke-width="1.200"/><path d="M1790.500 1009.800h2.300l3.500-2.600v5.500M1790.500 1009.800v4.400h2.300l2 1.500" stroke-width="1.200" stroke-linejoin="round"/><rect x="1812.600" y="1007.500" width="13.400" height="8.800" rx="2.200" stroke-width="1.300"/></g><circle cx="1772" cy="1016.500" r="1.100" fill="#1a1a1a"/><circle cx="1799.700" cy="1015.700" r="4.300" fill="#1a1a1a" stroke="#bfeeee" stroke-width="0.800"/><path d="M1797.900 1013.900l3.600 3.600M1801.500 1013.900l-3.600 3.600" stroke="#fff" stroke-width="1" fill="none"/><rect x="1814.600" y="1009.500" width="9.400" height="4.800" rx="0.800" fill="#1a1a1a"/><path d="M1826.600 1010.200v3.400q1.700 0 1.700-1.700t-1.700-1.700z" fill="#1a1a1a"/><path d="M1815.800 1003.800l-3.600 5.600h2.600l-1.400 4.200 4.400-5.800h-2.700l1.600-4z" fill="#1a1a1a" stroke="#bfeeee" stroke-width="0.700"/></svg><div class="a" style="left:1800px;top:995px;width:100px;text-align:right;font-size:11.5px;line-height:18px;color:#1a1a1a;white-space:nowrap">5:17 PM</div><div class="a" style="left:1800px;top:1011px;width:100px;text-align:right;font-size:12px;line-height:18px;color:#1a1a1a;white-space:nowrap;letter-spacing:.25px">8/29/2025</div></body></html>
